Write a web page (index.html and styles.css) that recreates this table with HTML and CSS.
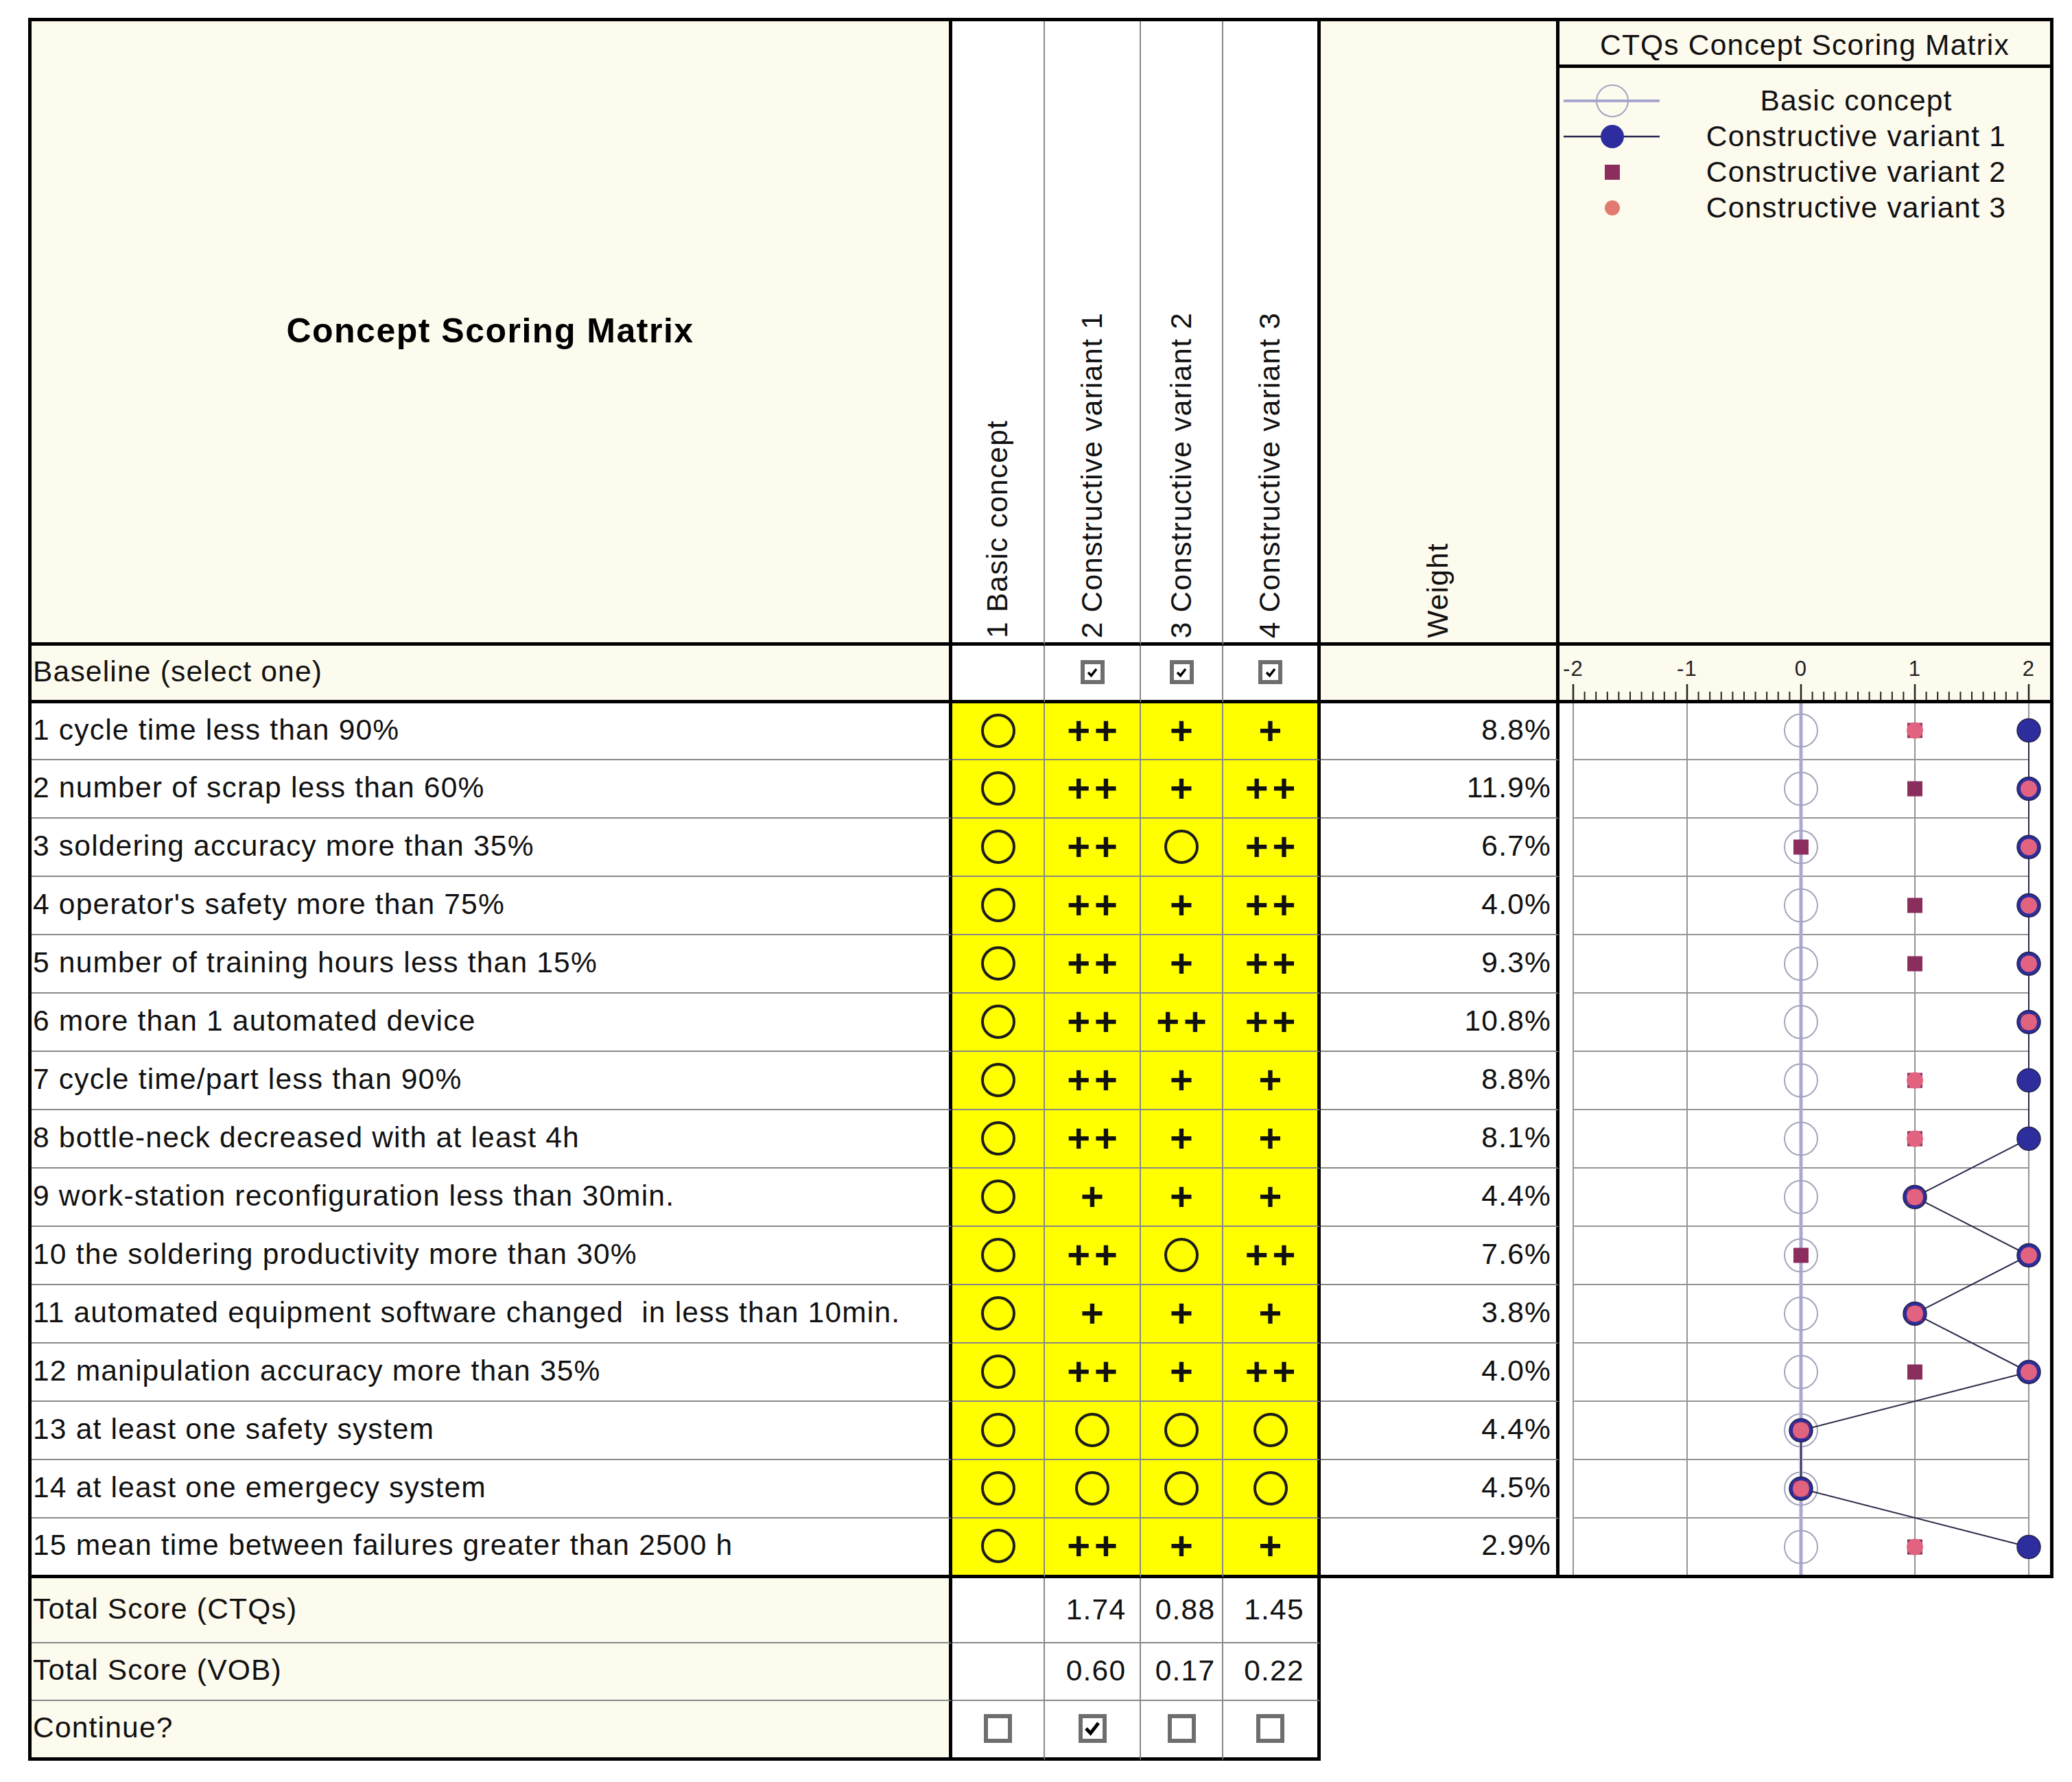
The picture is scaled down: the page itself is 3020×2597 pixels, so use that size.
FILE: index.html
```html
<!DOCTYPE html>
<html lang="en">
<head>
<meta charset="utf-8">
<title>Concept Scoring Matrix</title>
<link rel="stylesheet" href="styles.css">
</head>
<body>
<div class="sheet">
  <!-- header -->
  <div class="c cream tr tb h2 mtitle">Concept Scoring Matrix</div>
  <div class="c white tb h2 vh"><span class="vt">1 Basic concept</span></div>
  <div class="c white tb h2 vh"><span class="vt">2 Constructive variant 1</span></div>
  <div class="c white tb h2 vh"><span class="vt">3 Constructive variant 2</span></div>
  <div class="c white tr tb h2 vh"><span class="vt">4 Constructive variant 3</span></div>
  <div class="c cream tr tb h2 vh"><span class="vt">Weight</span></div>
  <div class="c cream tr tb ctitle">CTQs Concept Scoring Matrix</div>
  <div class="c cream tr tb legend">
    <div class="li">
      <svg width="150" height="52" viewBox="0 0 150 52"><path d="M6 26H146" stroke="#a6a6cf" stroke-width="4"/><circle cx="77" cy="26" r="23" fill="none" stroke="#a3a3bd" stroke-width="2"/></svg>
      <span>Basic concept</span>
    </div>
    <div class="li">
      <svg width="150" height="52" viewBox="0 0 150 52"><path d="M6 26H146" stroke="#26264e" stroke-width="2.5"/><circle cx="77" cy="26" r="17" fill="#2d2da0"/></svg>
      <span>Constructive variant 1</span>
    </div>
    <div class="li">
      <svg width="150" height="52" viewBox="0 0 150 52"><rect x="66" y="15" width="22" height="22" fill="#8b2e5d"/></svg>
      <span>Constructive variant 2</span>
    </div>
    <div class="li">
      <svg width="150" height="52" viewBox="0 0 150 52"><circle cx="77" cy="26" r="11" fill="#e27a72"/></svg>
      <span>Constructive variant 3</span>
    </div>
  </div>

  <!-- baseline row -->
  <div class="c cream tr tb lbl">Baseline (select one)</div>
  <div class="c white tb sc"></div>
  <div class="c white tb sc"><span class="cb"><svg width="18" height="16" viewBox="0 0 18 16"><path d="M3 8L7.5 12.5L15 3" fill="none" stroke="#000" stroke-width="3.5"/></svg></span></div>
  <div class="c white tb sc"><span class="cb"><svg width="18" height="16" viewBox="0 0 18 16"><path d="M3 8L7.5 12.5L15 3" fill="none" stroke="#000" stroke-width="3.5"/></svg></span></div>
  <div class="c white tr tb sc"><span class="cb"><svg width="18" height="16" viewBox="0 0 18 16"><path d="M3 8L7.5 12.5L15 3" fill="none" stroke="#000" stroke-width="3.5"/></svg></span></div>
  <div class="c cream tr tb"></div>
  <div class="c cream tr tb axis">
    <svg width="715" height="79" viewBox="0 0 715 79">
      <g font-family="Liberation Sans, Arial, sans-serif" font-size="31" fill="#222" text-anchor="middle">
        <text x="20" y="44">-2</text>
        <text x="186" y="44">-1</text>
        <text x="352" y="44">0</text>
        <text x="518" y="44">1</text>
        <text x="684" y="44">2</text>
      </g>
      <path d="M20 56V79M186 56V79M352 56V79M518 56V79M684 56V79" stroke="#222" stroke-width="2.5"/>
      <path d="M36.6 67V79M53.2 67V79M69.8 67V79M86.4 67V79M103 67V79M119.6 67V79M136.2 67V79M152.8 67V79M169.4 67V79M202.6 67V79M219.2 67V79M235.8 67V79M252.4 67V79M269 67V79M285.6 67V79M302.2 67V79M318.8 67V79M335.4 67V79M368.6 67V79M385.2 67V79M401.8 67V79M418.4 67V79M435 67V79M451.6 67V79M468.2 67V79M484.8 67V79M501.4 67V79M534.6 67V79M551.2 67V79M567.8 67V79M584.4 67V79M601 67V79M617.6 67V79M634.2 67V79M650.8 67V79M667.4 67V79" stroke="#222" stroke-width="2"/>
    </svg>
  </div>

  <!-- chart over data rows -->
  <div class="c white tr tb chart">
    <svg width="715" height="1270" viewBox="0 0 715 1270">
      <g stroke="#959595" stroke-width="2" fill="none">
        <path d="M20 0V1270M186 0V1270M518 0V1270M684 0V1270"/>
        <path d="M20 82H684M20 167H684M20 252H684M20 337H684M20 422H684M20 507H684M20 592H684M20 677H684M20 762H684M20 847H684M20 932H684M20 1017H684M20 1102H684M20 1187H684"/>
      </g>
      <path d="M352 0V1270" stroke="#a9a9d4" stroke-width="5"/>
      <g fill="none" stroke="#a4a4bc" stroke-width="2">
        <circle cx="352" cy="39.5" r="24"/><circle cx="352" cy="124.5" r="24"/><circle cx="352" cy="209.5" r="24"/>
        <circle cx="352" cy="294.5" r="24"/><circle cx="352" cy="379.5" r="24"/><circle cx="352" cy="464.5" r="24"/>
        <circle cx="352" cy="549.5" r="24"/><circle cx="352" cy="634.5" r="24"/><circle cx="352" cy="719.5" r="24"/>
        <circle cx="352" cy="804.5" r="24"/><circle cx="352" cy="889.5" r="24"/><circle cx="352" cy="974.5" r="24"/>
        <circle cx="352" cy="1059.5" r="24"/><circle cx="352" cy="1144.5" r="24"/><circle cx="352" cy="1229.5" r="24"/>
      </g>
      <polyline points="684,39.5 684,124.5 684,209.5 684,294.5 684,379.5 684,464.5 684,549.5 684,634.5 518,719.5 684,804.5 518,889.5 684,974.5 352,1059.5 352,1144.5 684,1229.5" fill="none" stroke="#2a2a4a" stroke-width="2"/>
      <g fill="#2d2d9e" stroke="#22224a" stroke-width="1.5">
        <circle cx="684" cy="39.5" r="17"/><circle cx="684" cy="124.5" r="17"/><circle cx="684" cy="209.5" r="17"/>
        <circle cx="684" cy="294.5" r="17"/><circle cx="684" cy="379.5" r="17"/><circle cx="684" cy="464.5" r="17"/>
        <circle cx="684" cy="549.5" r="17"/><circle cx="684" cy="634.5" r="17"/><circle cx="518" cy="719.5" r="17"/>
        <circle cx="684" cy="804.5" r="17"/><circle cx="518" cy="889.5" r="17"/><circle cx="684" cy="974.5" r="17"/>
        <circle cx="352" cy="1059.5" r="17"/><circle cx="352" cy="1144.5" r="17"/><circle cx="684" cy="1229.5" r="17"/>
      </g>
      <g fill="#8b2e5d">
        <rect x="507" y="28.5" width="22" height="22"/><rect x="507" y="113.5" width="22" height="22"/><rect x="341" y="198.5" width="22" height="22"/>
        <rect x="507" y="283.5" width="22" height="22"/><rect x="507" y="368.5" width="22" height="22"/><rect x="673" y="453.5" width="22" height="22"/>
        <rect x="507" y="538.5" width="22" height="22"/><rect x="507" y="623.5" width="22" height="22"/><rect x="507" y="708.5" width="22" height="22"/>
        <rect x="341" y="793.5" width="22" height="22"/><rect x="507" y="878.5" width="22" height="22"/><rect x="507" y="963.5" width="22" height="22"/>
        <rect x="341" y="1048.5" width="22" height="22"/><rect x="341" y="1133.5" width="22" height="22"/><rect x="507" y="1218.5" width="22" height="22"/>
      </g>
      <g fill="#e2637f">
        <circle cx="518" cy="39.5" r="12"/><circle cx="684" cy="124.5" r="12"/><circle cx="684" cy="209.5" r="12"/>
        <circle cx="684" cy="294.5" r="12"/><circle cx="684" cy="379.5" r="12"/><circle cx="684" cy="464.5" r="12"/>
        <circle cx="518" cy="549.5" r="12"/><circle cx="518" cy="634.5" r="12"/><circle cx="518" cy="719.5" r="12"/>
        <circle cx="684" cy="804.5" r="12"/><circle cx="518" cy="889.5" r="12"/><circle cx="684" cy="974.5" r="12"/>
        <circle cx="352" cy="1059.5" r="12"/><circle cx="352" cy="1144.5" r="12"/><circle cx="518" cy="1229.5" r="12"/>
      </g>
    </svg>
  </div>

  <!-- data rows -->
  <div class="c white tr lbl">1 cycle time less than 90%</div>
  <div class="c yel sc"><span class="o"></span></div>
  <div class="c yel sc"><span class="p">++</span></div>
  <div class="c yel sc"><span class="p">+</span></div>
  <div class="c yel tr sc"><span class="p">+</span></div>
  <div class="c white tr wt">8.8%</div>

  <div class="c white tr lbl">2 number of scrap less than 60%</div>
  <div class="c yel sc"><span class="o"></span></div>
  <div class="c yel sc"><span class="p">++</span></div>
  <div class="c yel sc"><span class="p">+</span></div>
  <div class="c yel tr sc"><span class="p">++</span></div>
  <div class="c white tr wt">11.9%</div>

  <div class="c white tr lbl">3 soldering accuracy more than 35%</div>
  <div class="c yel sc"><span class="o"></span></div>
  <div class="c yel sc"><span class="p">++</span></div>
  <div class="c yel sc"><span class="o"></span></div>
  <div class="c yel tr sc"><span class="p">++</span></div>
  <div class="c white tr wt">6.7%</div>

  <div class="c white tr lbl">4 operator's safety more than 75%</div>
  <div class="c yel sc"><span class="o"></span></div>
  <div class="c yel sc"><span class="p">++</span></div>
  <div class="c yel sc"><span class="p">+</span></div>
  <div class="c yel tr sc"><span class="p">++</span></div>
  <div class="c white tr wt">4.0%</div>

  <div class="c white tr lbl">5 number of training hours less than 15%</div>
  <div class="c yel sc"><span class="o"></span></div>
  <div class="c yel sc"><span class="p">++</span></div>
  <div class="c yel sc"><span class="p">+</span></div>
  <div class="c yel tr sc"><span class="p">++</span></div>
  <div class="c white tr wt">9.3%</div>

  <div class="c white tr lbl">6 more than 1 automated device</div>
  <div class="c yel sc"><span class="o"></span></div>
  <div class="c yel sc"><span class="p">++</span></div>
  <div class="c yel sc"><span class="p">++</span></div>
  <div class="c yel tr sc"><span class="p">++</span></div>
  <div class="c white tr wt">10.8%</div>

  <div class="c white tr lbl">7 cycle time/part less than 90%</div>
  <div class="c yel sc"><span class="o"></span></div>
  <div class="c yel sc"><span class="p">++</span></div>
  <div class="c yel sc"><span class="p">+</span></div>
  <div class="c yel tr sc"><span class="p">+</span></div>
  <div class="c white tr wt">8.8%</div>

  <div class="c white tr lbl">8 bottle-neck decreased with at least 4h</div>
  <div class="c yel sc"><span class="o"></span></div>
  <div class="c yel sc"><span class="p">++</span></div>
  <div class="c yel sc"><span class="p">+</span></div>
  <div class="c yel tr sc"><span class="p">+</span></div>
  <div class="c white tr wt">8.1%</div>

  <div class="c white tr lbl">9 work-station reconfiguration less than 30min.</div>
  <div class="c yel sc"><span class="o"></span></div>
  <div class="c yel sc"><span class="p">+</span></div>
  <div class="c yel sc"><span class="p">+</span></div>
  <div class="c yel tr sc"><span class="p">+</span></div>
  <div class="c white tr wt">4.4%</div>

  <div class="c white tr lbl">10 the soldering productivity more than 30%</div>
  <div class="c yel sc"><span class="o"></span></div>
  <div class="c yel sc"><span class="p">++</span></div>
  <div class="c yel sc"><span class="o"></span></div>
  <div class="c yel tr sc"><span class="p">++</span></div>
  <div class="c white tr wt">7.6%</div>

  <div class="c white tr lbl">11 automated equipment software changed&nbsp; in less than 10min.</div>
  <div class="c yel sc"><span class="o"></span></div>
  <div class="c yel sc"><span class="p">+</span></div>
  <div class="c yel sc"><span class="p">+</span></div>
  <div class="c yel tr sc"><span class="p">+</span></div>
  <div class="c white tr wt">3.8%</div>

  <div class="c white tr lbl">12 manipulation accuracy more than 35%</div>
  <div class="c yel sc"><span class="o"></span></div>
  <div class="c yel sc"><span class="p">++</span></div>
  <div class="c yel sc"><span class="p">+</span></div>
  <div class="c yel tr sc"><span class="p">++</span></div>
  <div class="c white tr wt">4.0%</div>

  <div class="c white tr lbl">13 at least one safety system</div>
  <div class="c yel sc"><span class="o"></span></div>
  <div class="c yel sc"><span class="o"></span></div>
  <div class="c yel sc"><span class="o"></span></div>
  <div class="c yel tr sc"><span class="o"></span></div>
  <div class="c white tr wt">4.4%</div>

  <div class="c white tr lbl">14 at least one emergecy system</div>
  <div class="c yel sc"><span class="o"></span></div>
  <div class="c yel sc"><span class="o"></span></div>
  <div class="c yel sc"><span class="o"></span></div>
  <div class="c yel tr sc"><span class="o"></span></div>
  <div class="c white tr wt">4.5%</div>

  <div class="c white tr tb lbl">15 mean time between failures greater than 2500 h</div>
  <div class="c yel tb sc"><span class="o"></span></div>
  <div class="c yel tb sc"><span class="p">++</span></div>
  <div class="c yel tb sc"><span class="p">+</span></div>
  <div class="c yel tr tb sc"><span class="p">+</span></div>
  <div class="c white tr tb wt">2.9%</div>

  <!-- totals -->
  <div class="c cream tr lbl">Total Score (CTQs)</div>
  <div class="c white"></div>
  <div class="c white num">1.74</div>
  <div class="c white num">0.88</div>
  <div class="c white tr num">1.45</div>

  <div class="c cream tr lbl">Total Score (VOB)</div>
  <div class="c white"></div>
  <div class="c white num">0.60</div>
  <div class="c white num">0.17</div>
  <div class="c white tr num">0.22</div>

  <div class="c cream tr tb lbl">Continue?</div>
  <div class="c white tb sc"><span class="cb lg"></span></div>
  <div class="c white tb sc"><span class="cb lg"><svg width="26" height="24" viewBox="0 0 26 24"><path d="M4 12L10.5 19L22 4" fill="none" stroke="#000" stroke-width="5"/></svg></span></div>
  <div class="c white tb sc"><span class="cb lg"></span></div>
  <div class="c white tr tb sc"><span class="cb lg"></span></div>
</div>
</body>
</html>
```

FILE: styles.css
```css
* {
  box-sizing: border-box;
}

body {
  margin: 0;
  background: #ffffff;
  font-family: "Liberation Sans", Arial, sans-serif;
  color: #111111;
}

.sheet {
  display: grid;
  grid-template-columns: 1342px 135px 140px 120px 142px 348px 720px;
  grid-template-rows: 68px 842px 84px 83px repeat(13, 85px) 87px 95px 84px 87px;
  width: 2952px;
  margin: 26px 0 0 41px;
  border-top: 5px solid #000;
  border-left: 5px solid #000;
  font-size: 42.5px;
  letter-spacing: 1.2px;
}

.c {
  display: flex;
  align-items: center;
  min-width: 0;
  overflow: hidden;
  border-right: 2px solid #888888;
  border-bottom: 2px solid #888888;
}

.cream { background: #fdfaee; }
.white { background: #ffffff; }
.yel { background: #ffff00; }

.tr { border-right: 5px solid #000; }
.tb { border-bottom: 5px solid #000; }

.h2 { grid-row: span 2; }

.lbl {
  grid-column: 1;
  padding-left: 2px;
  padding-bottom: 4px;
  white-space: nowrap;
}

.mtitle {
  justify-content: center;
  font-weight: bold;
  font-size: 50px;
  letter-spacing: 1.5px;
  padding-bottom: 4px;
  color: #000;
}

.vh {
  flex-direction: column;
  justify-content: flex-end;
  align-items: center;
  padding-bottom: 6px;
}

.vt {
  writing-mode: vertical-rl;
  transform: rotate(180deg);
  white-space: nowrap;
  line-height: 1.1;
}

.ctitle {
  justify-content: center;
  padding-top: 6px;
  white-space: nowrap;
}

.legend {
  flex-direction: column;
  align-items: stretch;
  justify-content: flex-start;
  padding-top: 22px;
}

.li {
  display: flex;
  align-items: center;
  height: 52px;
}

.li svg {
  flex: none;
  display: block;
}

.li span {
  flex: 1;
  text-align: center;
  white-space: nowrap;
}

.axis,
.chart {
  display: block;
}

.axis svg,
.chart svg {
  display: block;
}

.chart {
  grid-column: 7;
  grid-row: 4 / span 15;
}

.sc {
  justify-content: center;
  padding-bottom: 2px;
}

.wt {
  justify-content: flex-end;
  padding-right: 7px;
  padding-bottom: 4px;
}

.num {
  justify-content: center;
  padding-left: 11px;
  padding-bottom: 2px;
}

.o {
  display: block;
  width: 50px;
  height: 50px;
  border: 4.5px solid #1b1b1b;
  border-radius: 50%;
}

.p {
  font-weight: bold;
  font-size: 58px;
  line-height: 1;
  letter-spacing: 6px;
  margin-right: -6px;
  color: #111;
}

.cb {
  display: flex;
  align-items: center;
  justify-content: center;
  width: 35px;
  height: 35px;
  border: 6px solid #6e6e6e;
  background: #fff;
}

.cb.lg {
  width: 41px;
  height: 42px;
}

.cb svg {
  display: block;
}
```
